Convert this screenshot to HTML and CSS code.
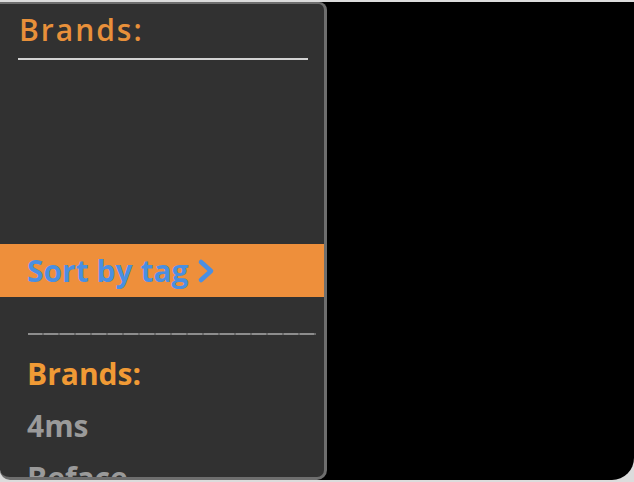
FILE: index.html
```html
<!DOCTYPE html>
<html>
<head>
<meta charset="utf-8">
<link rel="stylesheet" href="styles.css">
</head>
<body>
<div class="screen">
  <div class="panel">
    <div class="title">Brands:</div>
    <div class="rule"></div>
    <div class="sort">
      <span>Sort by tag</span>
      <svg class="chev" width="20" height="26" viewBox="0 0 20 26"><polyline points="5,4 15,13 5,22" fill="none" stroke="#4a8fe2" stroke-width="4.6" stroke-linecap="round" stroke-linejoin="round"/></svg>
    </div>
    <div class="dash"></div>
    <div class="item head">Brands:</div>
    <div class="item">4ms</div>
    <div class="item">Beface</div>
  </div>
</div>
</body>
</html>
```

FILE: styles.css
```css
html, body {
  margin: 0;
  padding: 0;
}
body {
  background: #dcdcdc;
  width: 634px;
  height: 482px;
  overflow: hidden;
  font-family: "Open Sans", "DejaVu Sans", sans-serif;
}
.screen {
  margin-top: 2px;
  height: 478px;
  background: #000;
  border-radius: 0 0 22px 22px;
  display: flex;
}
.panel {
  width: 324px;
  height: 473px;
  background: #313131;
  border: 2px solid #6e6e6e;
  border-left: none;
  border-right-width: 3px;
  border-bottom-width: 3px;
  border-radius: 0 8px 10px 10px;
  overflow: hidden;
  display: flex;
  flex-direction: column;
}
.title {
  margin: 8px 0 0 19px;
  font-size: 30px;
  line-height: 36px;
  font-weight: 600;
  letter-spacing: 2px;
  color: #e8903a;
}
.rule {
  margin: 10px 0 0 18px;
  width: 290px;
  height: 2px;
  background: #d2d2d2;
  flex-shrink: 0;
}
.sort {
  margin-top: 184px;
  height: 53px;
  flex-shrink: 0;
  background: #ee8f3b;
  display: flex;
  align-items: center;
  padding-left: 27px;
  font-size: 30px;
  line-height: 53px;
  font-weight: 700;
  color: #4a8fe2;
}
.chev {
  margin-left: 8px;
}
.dash {
  margin: 36px 0 0 28px;
  width: 288px;
  height: 2px;
  flex-shrink: 0;
  background: repeating-linear-gradient(90deg, #8d8d8d 0 14px, #6a6a6a 14px 16px);
}
.item {
  margin-left: 27px;
  font-size: 30px;
  line-height: 52px;
  height: 52px;
  flex-shrink: 0;
  font-weight: 700;
  color: #9a9a9a;
}
.item.head {
  margin-top: 13px;
  color: #f09a35;
}
```
